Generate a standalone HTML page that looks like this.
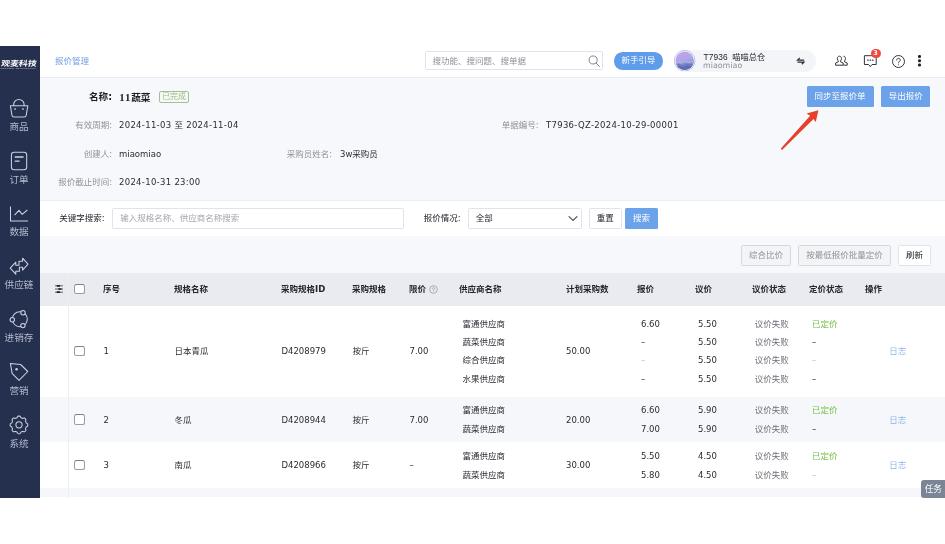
<!DOCTYPE html>
<html lang="zh-CN">
<head>
<meta charset="utf-8">
<title>报价管理</title>
<style>
*{box-sizing:border-box;margin:0;padding:0}
html,body{width:945px;height:544px;background:#fff;overflow:hidden}
body{position:relative;-webkit-font-smoothing:antialiased;font-family:"DejaVu Sans","Liberation Sans","Noto Sans CJK SC",sans-serif;font-size:8.5px;color:#2a2c33;line-height:1}
.abs{position:absolute;white-space:nowrap}
.t{position:absolute;white-space:nowrap;line-height:12px;height:12px}
/* sidebar */
#side{position:absolute;left:0;top:46px;width:40px;height:451.5px;background:#252f4e}
#side .lb{position:absolute;left:-1px;width:40px;text-align:center;color:#b4bacd;font-size:9.6px;line-height:12px;height:12px}
#sideic{position:absolute;left:0;top:0;width:40px;height:451.5px;fill:none;stroke:#cdd2e2;stroke-width:1.05;stroke-linecap:round;stroke-linejoin:round}
#logo{position:absolute;left:-6.3px;top:11.1px;width:50px;text-align:center;color:#fff;font-weight:bold;font-size:7.3px;line-height:12px;transform:scaleX(1.23) skewX(-6deg);font-family:"Noto Sans CJK SC",sans-serif}
#logosub{position:absolute;left:0;top:21.1px;width:200px;color:#9aa1b8;font-size:10px;line-height:10px;transform-origin:0 0;transform:scale(.25,.2);font-weight:bold;letter-spacing:.6px;white-space:nowrap}
/* header */
#hdr{position:absolute;left:40px;top:46px;width:905px;height:32.2px;background:#fff;border-bottom:1px solid #eaecf1}
#info{position:absolute;left:40px;top:78px;width:905px;height:122.5px;background:#f6f8fb;border-bottom:1px solid #edeff3}
#filt{position:absolute;left:40px;top:200.5px;width:905px;height:36px;background:#fff}
#tool{position:absolute;left:40px;top:236px;width:905px;height:37px;background:#f7f8fb}
#thead{position:absolute;left:40px;top:273px;width:905px;height:32.5px;background:#e9ebf1}
.row{position:absolute;left:40px;width:905px}
.g{color:#8f9299}
.n{letter-spacing:.3px}
.btn{position:absolute;text-align:center;border-radius:1.5px;white-space:nowrap}
.blue{background:#6ba2e9;color:#fff}
.th{position:absolute;font-weight:bold;color:#23252b;line-height:12px;height:12px;top:283px;white-space:nowrap}
.td{position:absolute;line-height:12px;height:12px;white-space:nowrap;margin-top:.4px}
.cb{position:absolute;width:10.7px;height:10.3px;border:1px solid #9a9ca3;border-top-color:#7d7f86;border-radius:2.5px;background:#fff}
</style>
</head>
<body>
<div id="root" style="position:absolute;left:0;top:0;width:945px;height:544px;will-change:transform;opacity:.999">
<div id="side">
  <div id="logo">观麦科技</div>
  <div id="logosub">GUANMAI TECHNOLOGY</div>
  <svg id="sideic" viewBox="0 46 40 451.5">
    <!-- 商品 -->
    <path d="M13.7 105.6V104.6a5.2 5.2 0 0 1 10.4 0v1"/>
    <path d="M10.4 105.8H27.8L26.2 115.3a2 2 0 0 1-2 1.7H14a2 2 0 0 1-2-1.7Z"/>
    <path d="M14.3 108.3h1.5v1.5h-1.5zM22.3 108.3h1.5v1.5h-1.5z" fill="#cdd2e2" stroke="none"/>
    <!-- 订单 -->
    <rect x="11.4" y="152.2" width="15.3" height="17.6" rx="2.7"/>
    <path d="M14.7 157h8.9M14.7 161.1h4.9" stroke-width="1.4" stroke-linecap="butt"/>
    <!-- 数据 -->
    <path d="M10.5 206.4V220.9H28.1" stroke-linecap="butt"/>
    <path d="M14.5 215.2L19 210.3L22.2 214.3L27.3 210" stroke-linecap="butt"/>
    <!-- 供应链 -->
    <path d="M10.2 268.2L15.8 262.2V265.2H19V261.2H22.6V258.2L28 264.2L22.6 270.2V267.2H19.4V271.2H15.8V274.2Z"/>
    <!-- 进销存 -->
    <circle cx="19.8" cy="319.2" r="7.5"/>
    <circle cx="23" cy="312.7" r="2.2" fill="#252f4e"/>
    <circle cx="12.3" cy="319.8" r="2.2" fill="#252f4e"/>
    <circle cx="22.9" cy="325.6" r="2.2" fill="#252f4e"/>
    <!-- 营销 -->
    <path d="M10.4 363.4L20.6 364.5L27.8 371.5L19 380.3L12.1 373.4Z"/>
    <circle cx="16.6" cy="369.3" r="1.3" fill="#cdd2e2" stroke="none"/>
    <!-- 系统 -->
    <path d="M19.00 416.10L19.35 416.11L19.69 416.13L20.03 416.20L20.32 416.56L20.58 416.96L20.81 417.36L21.02 417.74L21.29 417.86L21.56 417.96L21.83 418.06L22.10 418.18L22.36 418.31L22.64 418.41L23.05 418.29L23.50 418.17L23.96 418.07L24.42 418.02L24.72 418.21L24.97 418.44L25.22 418.68L25.46 418.93L25.69 419.18L25.88 419.48L25.83 419.94L25.73 420.40L25.61 420.85L25.49 421.26L25.59 421.54L25.72 421.80L25.84 422.07L25.94 422.34L26.04 422.61L26.16 422.88L26.54 423.09L26.94 423.32L27.34 423.58L27.70 423.87L27.77 424.21L27.79 424.55L27.80 424.90L27.79 425.25L27.77 425.59L27.70 425.93L27.34 426.22L26.94 426.48L26.54 426.71L26.16 426.92L26.04 427.19L25.94 427.46L25.84 427.73L25.72 428.00L25.59 428.26L25.49 428.54L25.61 428.95L25.73 429.40L25.83 429.86L25.88 430.32L25.69 430.62L25.46 430.87L25.22 431.12L24.97 431.36L24.72 431.59L24.42 431.78L23.96 431.73L23.50 431.63L23.05 431.51L22.64 431.39L22.36 431.49L22.10 431.62L21.83 431.74L21.56 431.84L21.29 431.94L21.02 432.06L20.81 432.44L20.58 432.84L20.32 433.24L20.03 433.60L19.69 433.67L19.35 433.69L19.00 433.70L18.65 433.69L18.31 433.67L17.97 433.60L17.68 433.24L17.42 432.84L17.19 432.44L16.98 432.06L16.71 431.94L16.44 431.84L16.17 431.74L15.90 431.62L15.64 431.49L15.36 431.39L14.95 431.51L14.50 431.63L14.04 431.73L13.58 431.78L13.28 431.59L13.03 431.36L12.78 431.12L12.54 430.87L12.31 430.62L12.12 430.32L12.17 429.86L12.27 429.40L12.39 428.95L12.51 428.54L12.41 428.26L12.28 428.00L12.16 427.73L12.06 427.46L11.96 427.19L11.84 426.92L11.46 426.71L11.06 426.48L10.66 426.22L10.30 425.93L10.23 425.59L10.21 425.25L10.20 424.90L10.21 424.55L10.23 424.21L10.30 423.87L10.66 423.58L11.06 423.32L11.46 423.09L11.84 422.88L11.96 422.61L12.06 422.34L12.16 422.07L12.28 421.80L12.41 421.54L12.51 421.26L12.39 420.85L12.27 420.40L12.17 419.94L12.12 419.48L12.31 419.18L12.54 418.93L12.78 418.68L13.03 418.44L13.28 418.21L13.58 418.02L14.04 418.07L14.50 418.17L14.95 418.29L15.36 418.41L15.64 418.31L15.90 418.18L16.17 418.06L16.44 417.96L16.71 417.86L16.98 417.74L17.19 417.36L17.42 416.96L17.68 416.56L17.97 416.20L18.31 416.13L18.65 416.11Z"/>
    <circle cx="19" cy="424.8" r="3.1"/>
  </svg>
  <div class="lb" style="top:75px">商品</div>
  <div class="lb" style="top:127.8px">订单</div>
  <div class="lb" style="top:180.4px">数据</div>
  <div class="lb" style="top:233px">供应链</div>
  <div class="lb" style="top:286px">进销存</div>
  <div class="lb" style="top:338.5px">营销</div>
  <div class="lb" style="top:391.6px">系统</div>
</div>
<div id="hdr"></div>
<div class="t" style="left:55px;top:55px;color:#6e9fe0">报价管理</div>
<!-- search -->
<div class="abs" style="left:425px;top:51px;width:178px;height:18.8px;border:1px solid #e0e3e9;border-radius:1.5px;background:#fff"></div>
<div class="t" style="left:432.5px;top:54.5px;color:#8d9099">搜功能、搜问题、搜单据</div>
<svg class="abs" style="left:586.6px;top:53.6px;width:14px;height:14px" viewBox="0 0 15 15" fill="none" stroke="#7c7f88" stroke-width="1"><circle cx="6.6" cy="6.4" r="4.3"/><path d="M9.8 9.7l3.6 3.7" stroke-linecap="round"/></svg>
<div class="btn" style="left:613.8px;top:52.3px;width:49.3px;height:17.4px;border-radius:8.7px;background:#5f9cea;color:#fff;line-height:17px;font-size:8.5px">新手引导</div>
<!-- user pill -->
<div class="abs" style="left:674px;top:50px;width:142px;height:22px;border-radius:11px;background:#f4f5f8"></div>
<svg class="abs" style="left:674.2px;top:50.1px;width:21.4px;height:21.4px" viewBox="0 0 41 41">
  <defs><linearGradient id="av" x1="0" y1="0" x2="0.3" y2="1"><stop offset="0" stop-color="#d09fdc"/><stop offset=".4" stop-color="#b9a4ea"/><stop offset=".6" stop-color="#a9a6e6"/><stop offset="1" stop-color="#5d69b6"/></linearGradient><clipPath id="avc"><circle cx="20.5" cy="20.5" r="17.6"/></clipPath></defs>
  <circle cx="20.5" cy="20.5" r="19.7" fill="#fff" stroke="#8d9fe8" stroke-width="1.2"/>
  <g clip-path="url(#avc)"><rect x="0" y="0" width="41" height="41" fill="url(#av)"/><path d="M0 25l7-3 6 2 8-5 7 3 6-2 7 3v18H0z" fill="#8a8fd2" opacity=".85"/><path d="M4 25l5-2 5 2 7-4 6 3 6-2 6 2" stroke="#d9d4f4" stroke-width="1.6" fill="none" opacity=".85"/><path d="M0 30l9-3 8 2 9-3 8 2 7-1v14H0z" fill="#5b66b2" opacity=".85"/><path d="M2 31l8-2 8 2 8-3 8 2" stroke="#a9aee0" stroke-width="1" fill="none" opacity=".7"/></g>
</svg>
<div class="t" style="left:703.4px;top:51px;font-size:8.25px;color:#1f2127"><span style="font-family:'Liberation Sans',sans-serif;font-size:8.4px;letter-spacing:.15px">T7936</span><span style="margin-left:4.4px">喵喵总仓</span></div>
<div class="t" style="left:703px;top:59.5px;font-size:7.9px;color:#8d9099;letter-spacing:.02px">miaomiao</div>
<svg class="abs" style="left:796px;top:56.9px;width:9.6px;height:8px;transform:scaleX(-1)" viewBox="0 0 12 11" fill="none" stroke="#2a2c33" stroke-width="1.7" stroke-linecap="butt" stroke-linejoin="miter"><path d="M1.4 4.2h9L7.4 1.2M10.6 7h-9l3 3"/></svg>
<!-- right icons -->
<svg class="abs" style="left:834px;top:53px;width:16px;height:16px" viewBox="0 0 16 16" fill="none" stroke="#33353c" stroke-width="1" stroke-linejoin="round"><path d="M5.4 3.2c-1.3 0-2.1 1-2.1 2.4 0 1 .4 1.8 1 2.3v.9L1.6 10v2.2h7.6V10L6.5 8.8v-.9c.6-.5 1-1.3 1-2.3 0-1.4-.8-2.4-2.1-2.4z"/><path d="M9.4 3.2c1.3 0 2.1 1 2.1 2.4 0 1-.4 1.800-1 2.3v.9l2.7 1.2v2.2H9.4"/></svg>
<svg class="abs" style="left:863px;top:54px;width:15px;height:15px" viewBox="0 0 15 15" fill="none" stroke="#33353c" stroke-width="1" stroke-linejoin="round"><path d="M1.4 1.7h11.8v8.8H9L7.3 12.6L5.6 10.5H1.400z"/><path d="M4.7 6.2h.5M7.1 6.2h.5M9.5 6.2h.5" stroke-width="1.2" stroke-linecap="round"/></svg>
<div class="abs" style="left:870.6px;top:48.5px;width:10px;height:9px;border-radius:4.5px;background:#f0483e;color:#fff;font-size:6.5px;line-height:9px;text-align:center;font-weight:bold">3</div>
<svg class="abs" style="left:891px;top:53.5px;width:15px;height:15px" viewBox="0 0 15 15" fill="none" stroke="#33353c" stroke-width="1"><circle cx="7.5" cy="7.5" r="6"/><path d="M5.7 6.1c0-1.100.8-1.8 1.800-1.800s1.800.7 1.8 1.7c0 1.300-1.8 1.400-1.8 2.9" stroke-linecap="round"/><circle cx="7.5" cy="10.7" r=".5" fill="#33353c" stroke="none"/></svg>
<div class="abs" style="left:918.3px;top:55.3px;width:2.7px;height:2.7px;border-radius:50%;background:#23252b;box-shadow:0 4.25px 0 #23252b,0 8.5px 0 #23252b"></div>
<div id="info"></div>
<div class="t" style="left:40px;width:72px;text-align:right;top:91px;font-size:9.6px;font-weight:bold;color:#1b1d22">名称:</div>
<div class="t" style="left:119.3px;top:91px;font-size:9.6px;font-weight:bold;color:#1b1d22"><span style="font-family:'Liberation Serif',serif;font-size:10.8px;letter-spacing:.85px">11</span>蔬菜</div>
<div class="abs" style="left:159.2px;top:90.8px;width:29.6px;height:12.2px;border:1px solid #a6bd97;border-radius:2px;color:#9dba8c;font-size:7.9px;line-height:10.2px;text-align:center;background:#f6f9f4">已完成</div>
<div class="t g" style="left:40px;width:72px;text-align:right;top:119.2px">有效周期:</div>
<div class="t n" style="left:119px;top:119.2px">2024-11-03 至 2024-11-04</div>
<div class="t g" style="left:440px;width:98.5px;text-align:right;top:119.2px">单据编号:</div>
<div class="t n" style="left:546px;top:119.2px">T7936-QZ-2024-10-29-00001</div>
<div class="t g" style="left:40px;width:72px;text-align:right;top:147.7px">创建人:</div>
<div class="t" style="left:119px;top:147.7px">miaomiao</div>
<div class="t g" style="left:240px;width:92px;text-align:right;top:147.7px">采购员姓名:</div>
<div class="t" style="left:340px;top:147.7px">3w采购员</div>
<div class="t g" style="left:40px;width:72px;text-align:right;top:176.2px">报价截止时间:</div>
<div class="t n" style="left:119px;top:176.2px">2024-10-31 23:00</div>
<!-- top right buttons -->
<div class="btn blue" style="left:806.5px;top:86px;width:67px;height:21.4px;line-height:21.4px">同步至报价单</div>
<div class="btn blue" style="left:880.8px;top:86px;width:49.7px;height:21.4px;line-height:21.4px">导出报价</div>
<!-- red arrow -->
<svg class="abs" style="left:775px;top:104px;width:52px;height:50px" viewBox="775 104 52 50"><path d="M781.1 148.2L810.1 115.8L806.6 113.4L818.4 110.3L815.8 122.1L813.5 119L782.5 149.6A1 1 0 0 1 781.1 148.2Z" fill="#e6402a"/></svg>
<div id="filt"></div>
<div class="t" style="left:59.3px;top:212.4px;color:#23252b">关键字搜索:</div>
<div class="abs" style="left:111.8px;top:208.3px;width:292.4px;height:20.8px;border:1px solid #e0e3e9;border-radius:1.5px;background:#fff"></div>
<div class="t" style="left:120.3px;top:212.4px;color:#a3a6ae">输入规格名称、供应商名称搜索</div>
<div class="t" style="left:423.7px;top:212.4px;color:#23252b">报价情况:</div>
<div class="abs" style="left:467.7px;top:208.3px;width:114.2px;height:20.8px;border:1px solid #e0e3e9;border-radius:1.5px;background:#fff"></div>
<div class="t" style="left:475.7px;top:212.4px;color:#23252b">全部</div>
<svg class="abs" style="left:567px;top:214px;width:12px;height:9px" viewBox="0 0 12 9" fill="none" stroke="#44464e" stroke-width="1.1" stroke-linecap="round" stroke-linejoin="round"><path d="M2 2.6l4 3.8 4-3.8"/></svg>
<div class="btn" style="left:589px;top:208.3px;width:32.5px;height:20.8px;line-height:18.8px;border:1px solid #e0e3e9;background:#fff;color:#23252b">重置</div>
<div class="btn blue" style="left:625px;top:208.3px;width:33px;height:20.8px;line-height:20.8px">搜索</div>
<div id="tool"></div>
<div class="btn" style="left:741.2px;top:244.5px;width:49.5px;height:21px;line-height:19px;border:1px solid #d6d8de;background:#f3f4f6;color:#8f929a">综合比价</div>
<div class="btn" style="left:798.3px;top:244.5px;width:92.5px;height:21px;line-height:19px;border:1px solid #d6d8de;background:#f3f4f6;color:#8f929a">按最低报价批量定价</div>
<div class="btn" style="left:898.2px;top:244.5px;width:32.6px;height:21px;line-height:19px;border:1px solid #e0e3e9;background:#fff;color:#23252b">刷新</div>
<div id="thead"></div>
<svg class="abs" style="left:54.9px;top:284.9px;width:8.1px;height:8.1px" viewBox="0 0 8.1 8.1" fill="none" stroke="#3a3c44" stroke-width=".8"><path d="M0 .8h8.1M0 4h8.1M0 7.2h8.1"/><path d="M2.5 .8h1.800M4 4h1.800M2.5 7.2h1.800" stroke="#1d1f25" stroke-width="1.7" stroke-linecap="round"/></svg>
<div class="cb" style="left:74.2px;top:284px"></div>
<div class="th" style="left:103px">序号</div>
<div class="th" style="left:174px">规格名称</div>
<div class="th" style="left:281px">采购规格ID</div>
<div class="th" style="left:352px">采购规格</div>
<div class="th" style="left:409px">限价</div>
<div class="th" style="left:459px">供应商名称</div>
<div class="th" style="left:566px">计划采购数</div>
<div class="th" style="left:637px">报价</div>
<div class="th" style="left:695px">议价</div>
<div class="th" style="left:752px">议价状态</div>
<div class="th" style="left:809px">定价状态</div>
<div class="th" style="left:865px">操作</div>
<svg class="abs" style="left:429px;top:284.8px;width:9px;height:9px" viewBox="0 0 9 9" fill="none" stroke="#8d9099" stroke-width=".7"><circle cx="4.5" cy="4.5" r="3.8"/><path d="M3.4 3.7c0-.7.500-1.1 1.100-1.100s1.100.4 1.1 1c0 .8-1.100.9-1.1 1.8" stroke-linecap="round"/><circle cx="4.5" cy="6.6" r=".35" fill="#8d9099" stroke="none"/></svg>
<div class="row" style="top:305.5px;height:91.2px;background:#fff"></div>
<div class="cb" style="left:74.2px;top:345.9px"></div>
<div class="td " style="left:103.5px;top:345.1px">1</div>
<div class="td " style="left:174.5px;top:345.1px">日本青瓜</div>
<div class="td " style="left:281.5px;top:345.1px">D4208979</div>
<div class="td " style="left:352.5px;top:345.1px">按斤</div>
<div class="td " style="left:409.5px;top:345.1px">7.00</div>
<div class="td " style="left:566px;top:345.1px">50.00</div>
<div class="td " style="left:889.2px;top:345.1px;color:#8db6ec">日志</div>
<div class="td " style="left:462.5px;top:317.2px">富通供应商</div>
<div class="td " style="left:641px;top:317.2px">6.60</div>
<div class="td " style="left:698px;top:317.2px">5.50</div>
<div class="td " style="left:754.8px;top:317.2px;color:#6d7078">议价失败</div>
<div class="td " style="left:812px;top:317.2px;color:#74c043">已定价</div>
<div class="td " style="left:462.5px;top:335.6px">蔬菜供应商</div>
<div class="td " style="left:641px;top:335.6px">–</div>
<div class="td " style="left:698px;top:335.6px">5.50</div>
<div class="td " style="left:754.8px;top:335.6px;color:#6d7078">议价失败</div>
<div class="td " style="left:812px;top:335.6px">–</div>
<div class="td " style="left:462.5px;top:354.0px">综合供应商</div>
<div class="td " style="left:641px;top:354.0px;color:#b9bcc4">–</div>
<div class="td " style="left:698px;top:354.0px">5.50</div>
<div class="td " style="left:754.8px;top:354.0px;color:#6d7078">议价失败</div>
<div class="td " style="left:812px;top:354.0px;color:#b9bcc4">–</div>
<div class="td " style="left:462.5px;top:372.6px">水果供应商</div>
<div class="td " style="left:641px;top:372.6px">–</div>
<div class="td " style="left:698px;top:372.6px">5.50</div>
<div class="td " style="left:754.8px;top:372.6px;color:#6d7078">议价失败</div>
<div class="td " style="left:812px;top:372.6px">–</div>
<div class="row" style="top:396.7px;height:45.6px;background:#f6f7fa"></div>
<div class="cb" style="left:74.2px;top:414.3px"></div>
<div class="td " style="left:103.5px;top:413.5px">2</div>
<div class="td " style="left:174.5px;top:413.5px">冬瓜</div>
<div class="td " style="left:281.5px;top:413.5px">D4208944</div>
<div class="td " style="left:352.5px;top:413.5px">按斤</div>
<div class="td " style="left:409.5px;top:413.5px">7.00</div>
<div class="td " style="left:566px;top:413.5px">20.00</div>
<div class="td " style="left:889.2px;top:413.5px;color:#8db6ec">日志</div>
<div class="td " style="left:462.5px;top:404.0px">富通供应商</div>
<div class="td " style="left:641px;top:404.0px">6.60</div>
<div class="td " style="left:698px;top:404.0px">5.90</div>
<div class="td " style="left:754.8px;top:404.0px;color:#6d7078">议价失败</div>
<div class="td " style="left:812px;top:404.0px;color:#74c043">已定价</div>
<div class="td " style="left:462.5px;top:422.6px">蔬菜供应商</div>
<div class="td " style="left:641px;top:422.6px">7.00</div>
<div class="td " style="left:698px;top:422.6px">5.90</div>
<div class="td " style="left:754.8px;top:422.6px;color:#6d7078">议价失败</div>
<div class="td " style="left:812px;top:422.6px">–</div>
<div class="row" style="top:442.3px;height:45.4px;background:#fff"></div>
<div class="cb" style="left:74.2px;top:459.7px"></div>
<div class="td " style="left:103.5px;top:459.0px">3</div>
<div class="td " style="left:174.5px;top:459.0px">南瓜</div>
<div class="td " style="left:281.5px;top:459.0px">D4208966</div>
<div class="td " style="left:352.5px;top:459.0px">按斤</div>
<div class="td " style="left:409.5px;top:459.0px">–</div>
<div class="td " style="left:566px;top:459.0px">30.00</div>
<div class="td " style="left:889.2px;top:459.0px;color:#8db6ec">日志</div>
<div class="td " style="left:462.5px;top:450.0px">富通供应商</div>
<div class="td " style="left:641px;top:450.0px">5.50</div>
<div class="td " style="left:698px;top:450.0px">4.50</div>
<div class="td " style="left:754.8px;top:450.0px;color:#6d7078">议价失败</div>
<div class="td " style="left:812px;top:450.0px;color:#74c043">已定价</div>
<div class="td " style="left:462.5px;top:468.4px">蔬菜供应商</div>
<div class="td " style="left:641px;top:468.4px">5.80</div>
<div class="td " style="left:698px;top:468.4px">4.50</div>
<div class="td " style="left:754.8px;top:468.4px;color:#6d7078">议价失败</div>
<div class="td " style="left:812px;top:468.4px;color:#b9bcc4">–</div>
<div class="row" style="top:487.7px;height:9.8px;background:#f6f7fa"></div>
<div class="abs" style="left:68px;top:273px;width:1px;height:224.5px;background:#eceef2"></div>
<div class="abs" style="left:920.7px;top:479.8px;width:24.3px;height:17.8px;background:#7b8595;border-radius:3px 0 0 3px;color:#fff;font-size:8.6px;line-height:18.6px;padding-left:4px">任务</div>
</div>
</body>
</html>
